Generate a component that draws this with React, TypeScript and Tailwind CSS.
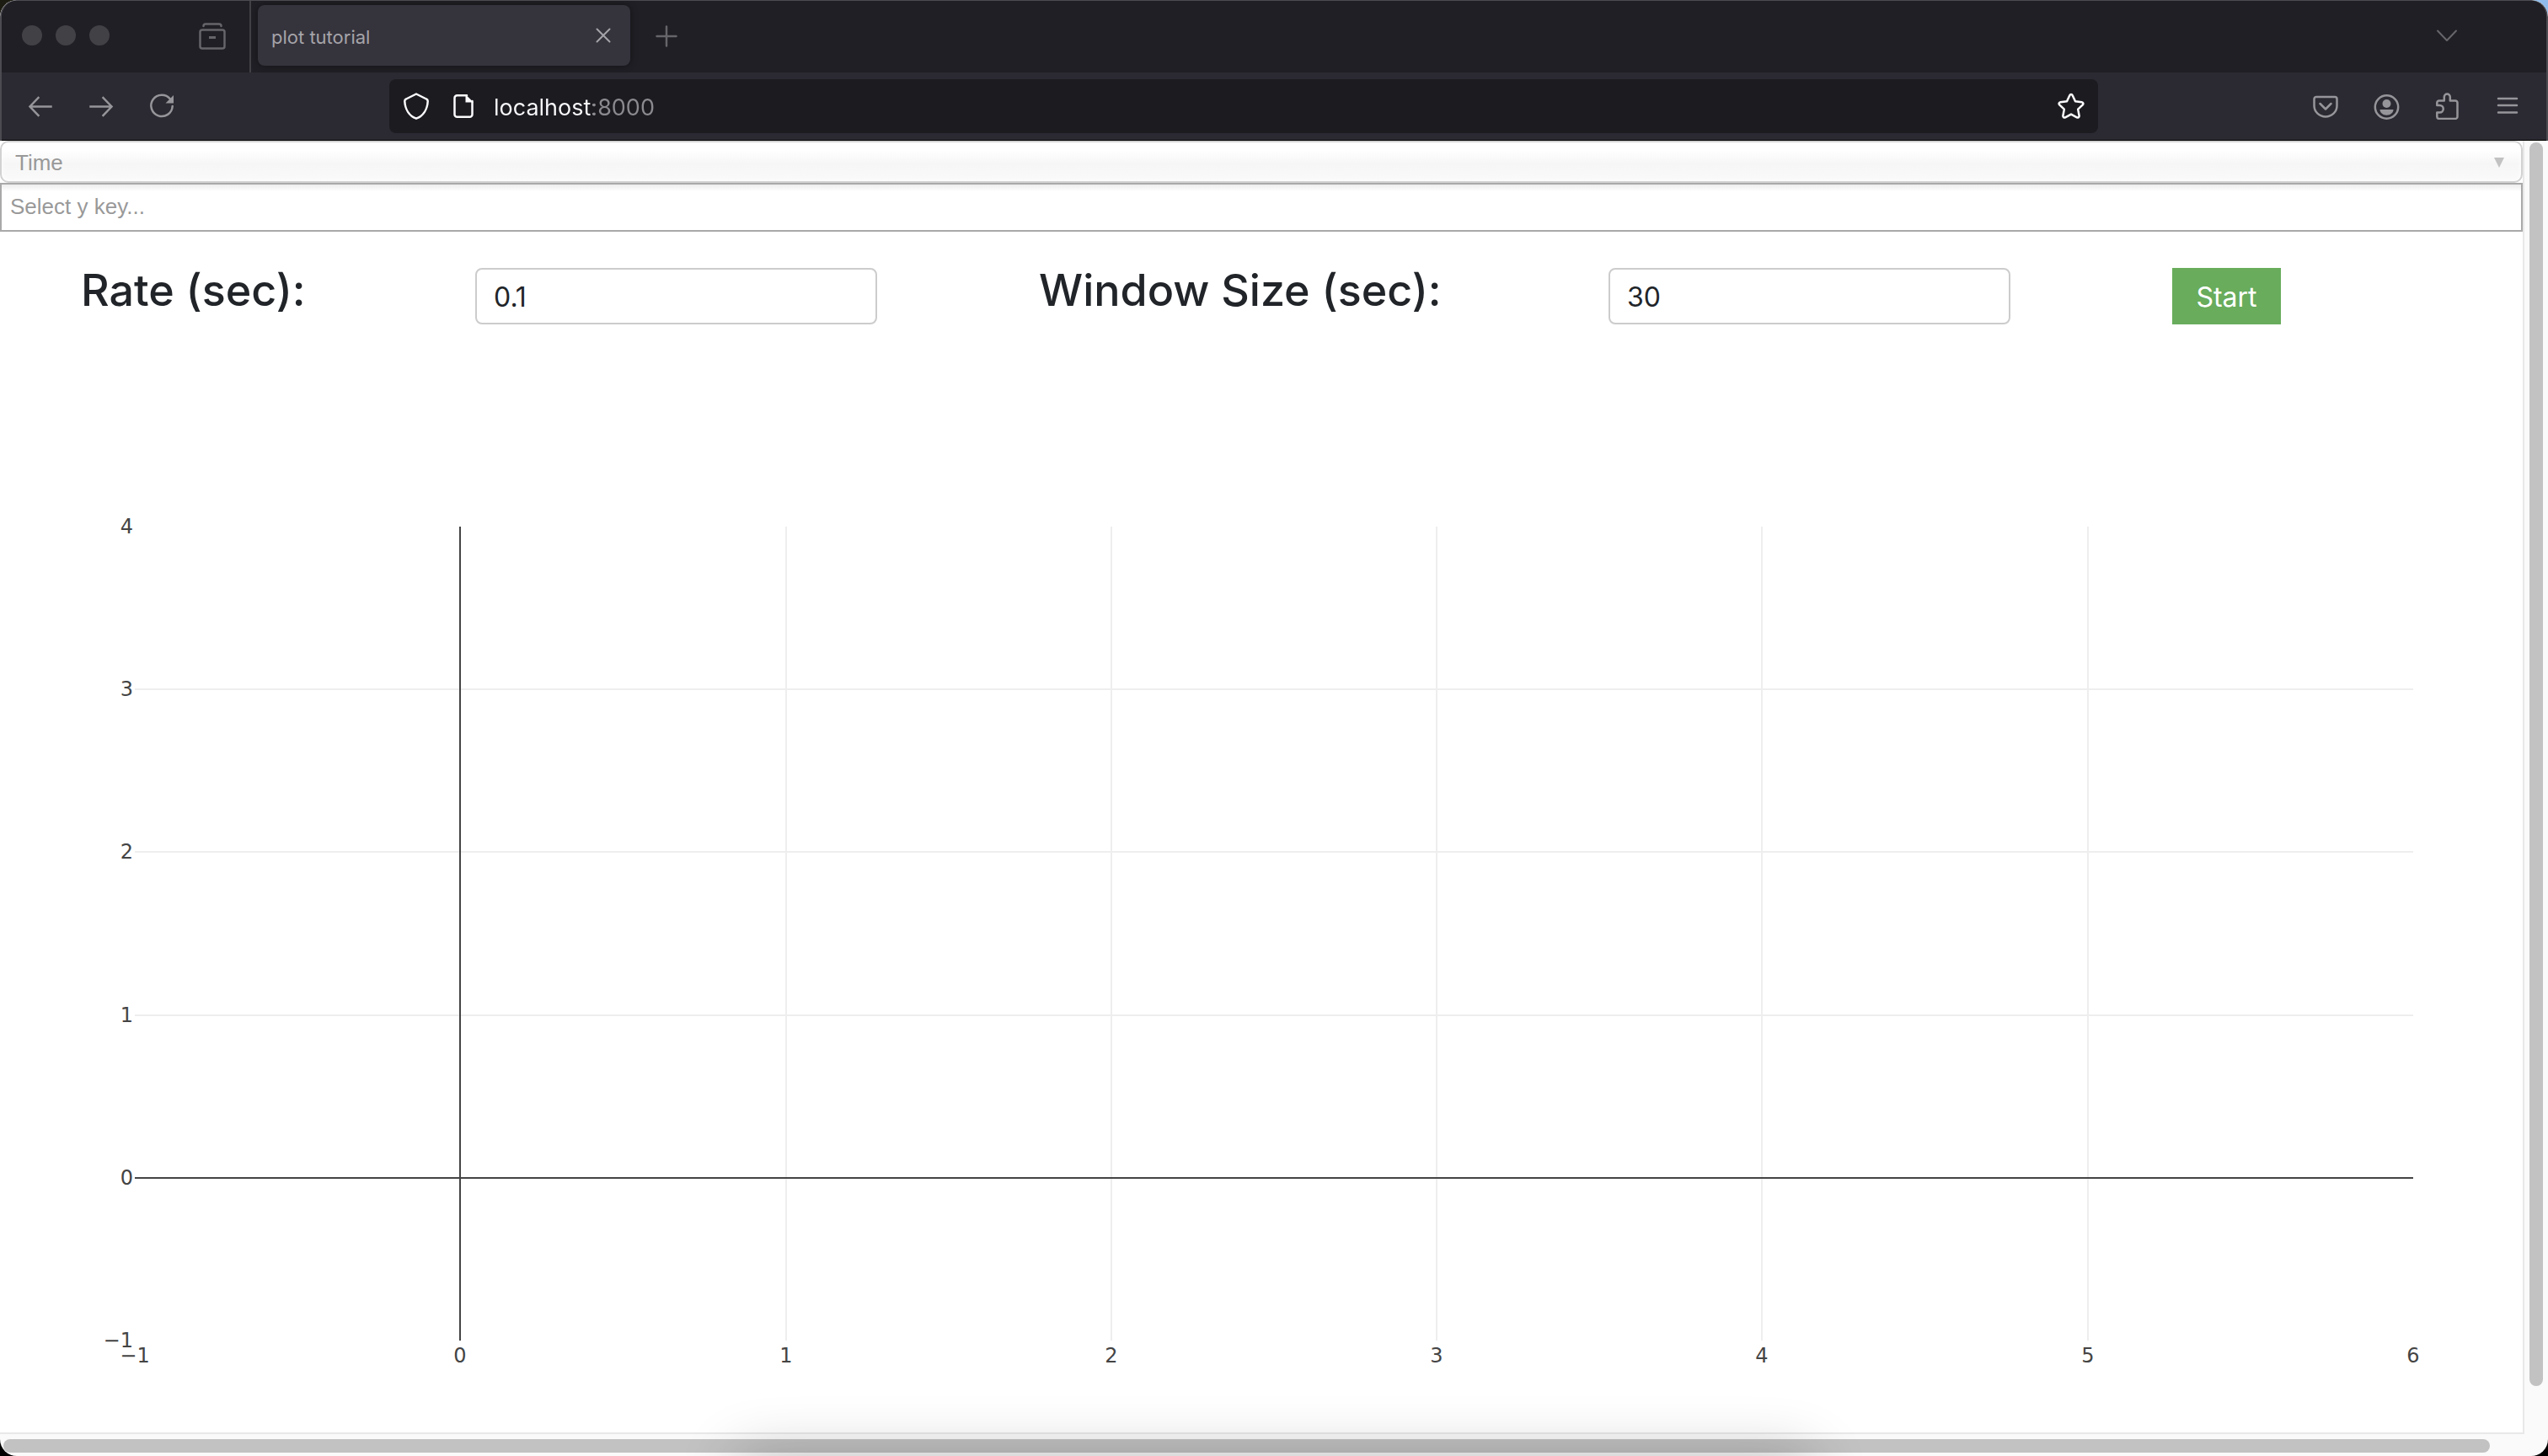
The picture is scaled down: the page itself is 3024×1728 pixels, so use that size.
import type { ReactNode } from "react";

const X_TICKS = [-1, 0, 1, 2, 3, 4, 5, 6];
const Y_TICKS = [-1, 0, 1, 2, 3, 4];

const PLOT = { left: 160, right: 2864, top: 200, bottom: 1166 };

const xPos = (v: number) =>
  Math.round(PLOT.left + ((v + 1) * (PLOT.right - PLOT.left)) / 7);
const yPos = (v: number) =>
  Math.round(PLOT.bottom - ((v + 1) * (PLOT.bottom - PLOT.top)) / 5);
const tickLabel = (v: number) => (v < 0 ? `\u2212${Math.abs(v)}` : `${v}`);

function Icon({ children }: { children: ReactNode }) {
  return (
    <svg
      viewBox="0 0 32 32"
      className="block size-8 shrink-0"
      fill="none"
      stroke="currentColor"
      strokeWidth="2.5"
      strokeLinecap="round"
      strokeLinejoin="round"
      aria-hidden="true"
    >
      {children}
    </svg>
  );
}

function TabBar() {
  return (
    <header className="flex h-[86px] items-center bg-[#201f25] text-[#65656a]">
      <div className="flex w-[296px] shrink-0 items-center pr-7 pl-[26px]">
        <div className="flex gap-4 pb-0.5">
          <span className="size-6 rounded-full bg-[#424146]" />
          <span className="size-6 rounded-full bg-[#424146]" />
          <span className="size-6 rounded-full bg-[#424146]" />
        </div>
        <button type="button" aria-label="Recent browsing" className="ml-auto">
          <Icon>
            <path d="M5.5 4C5.5 2.5 6.5 1.5 8 1.5h16c1.500 0 2.500 1 2.500 2.500" />
            <rect x="1.500" y="8.500" width="29" height="22" rx="2.500" />
            <path d="M12 17.500h8" strokeWidth="3" strokeLinecap="butt" />
          </Icon>
        </button>
      </div>
      <div className="h-full w-0.5 shrink-0 bg-[#424146]" />
      <div className="-mt-0.5 ml-2 flex h-[72px] w-[442px] shrink-0 items-center justify-between rounded-lg bg-[#35333c] px-4 text-[#a5a4a9] shadow-[0_0_8px_rgba(0,0,0,0.4)]">
        <span className="pt-1 text-[22px] leading-8">plot tutorial</span>
        <button type="button" aria-label="Close tab">
          <Icon>
            <path d="M8.500 8.500l15 15M23.500 8.500l-15 15" strokeWidth="2" />
          </Icon>
        </button>
      </div>
      <button type="button" aria-label="New tab" className="ml-[27px]">
        <Icon>
          <path d="M16 4.500v23M4.500 16h23" />
        </Icon>
      </button>
      <button type="button" aria-label="List all tabs" className="mr-[104px] ml-auto">
        <Icon>
          <path d="M5 9.500l11 11.500 11-11.500" strokeWidth="2" />
        </Icon>
      </button>
    </header>
  );
}

function NavBar() {
  return (
    <nav className="flex h-[81px] items-center border-b border-black bg-[#2b2a32] text-[#96959a]">
      <div className="flex w-[462px] shrink-0 gap-10 pl-8">
        <button type="button" aria-label="Back">
          <Icon>
            <path d="M28.500 16.500H4M13.500 6L3.500 16.500l10 10.500" strokeLinecap="square" strokeLinejoin="miter" />
          </Icon>
        </button>
        <button type="button" aria-label="Forward">
          <Icon>
            <path d="M3.500 16.500H28M18.500 6l10 10.500-10 10.500" strokeLinecap="square" strokeLinejoin="miter" />
          </Icon>
        </button>
        <button type="button" aria-label="Reload">
          <Icon>
            <path d="M26 7.500A12.700 12.700 0 1 0 28.700 16" />
            <path d="M30 3v9.500h-9.500z" fill="currentColor" stroke="none" />
          </Icon>
        </button>
      </div>
      <div className="flex h-16 grow items-center rounded-lg bg-[#1c1b20] px-4 text-[#fbfbfe]">
        <button type="button" aria-label="Tracking protection">
          <Icon>
            <path d="M16 1.500L28 7.500c1.500.7 1.800 1.500 1.700 2.800C29.200 19.500 24.500 27.500 16 30.700 7.500 27.500 2.800 19.500 2.300 10.300 2.200 9 2.500 8.200 4 7.500z" />
          </Icon>
        </button>
        <button type="button" aria-label="Site information" className="ml-6">
          <Icon>
            <path d="M20 3.300H8.500a3 3 0 0 0-3 3v19.400a3 3 0 0 0 3 3h15a3 3 0 0 0 3-3V10" />
            <path d="M18.500 2l9.500 9.500h-9.500z" fill="currentColor" stroke="none" />
          </Icon>
        </button>
        <input
          type="text"
          aria-label="Address"
          defaultValue="localhost:8000"
          className="ml-5 h-10 min-w-0 grow bg-[linear-gradient(to_right,#fbfbfe_118px,#8b8a8f_118px)] bg-clip-text pt-1 text-[27px] text-transparent caret-white outline-none"
        />
        <button type="button" aria-label="Bookmark this page">
          <Icon>
            <path d="M14.300 3.200c.7-1.500 2.700-1.500 3.400 0l3.300 7 7.700 1c1.600.2 2.200 2.100 1.100 3.200l-5.600 5.300 1.400 7.600c.3 1.600-1.300 2.800-2.700 2L16 25.600l-6.900 3.700c-1.400.8-3-.4-2.700-2l1.400-7.600-5.600-5.300c-1.100-1.100-.5-3 1.100-3.200l7.700-1z" />
          </Icon>
        </button>
      </div>
      <div className="flex shrink-0 gap-10 pr-8 pl-[254px]">
        <button type="button" aria-label="Save to Pocket">
          <Icon>
            <path d="M5 5h22a2.500 2.500 0 0 1 2.500 2.500v8a13.500 13 0 0 1-27 0v-8A2.500 2.500 0 0 1 5 5z" />
            <path d="M9.500 13l6.500 6.500 6.500-6.500" />
          </Icon>
        </button>
        <button type="button" aria-label="Account">
          <Icon>
            <circle cx="16.500" cy="17" r="13.700" />
            <circle cx="16.500" cy="13" r="5" fill="currentColor" stroke="none" />
            <path d="M8.500 20h16c0 4-4 6.700-8 6.700s-8-2.700-8-6.700z" fill="currentColor" stroke="none" />
          </Icon>
        </button>
        <button type="button" aria-label="Extensions">
          <Icon>
            <path d="M4.300 15V12a2.500 2.500 0 0 1 2.500-2.500H12.800V5a3.500 3.500 0 0 1 7 0V9.500H26a2.500 2.500 0 0 1 2.500 2.500v16.400a2.500 2.500 0 0 1-2.500 2.500H6.800a2.500 2.500 0 0 1-2.500-2.500V23.500h3.200a4.250 4.250 0 0 0 0-8.500z" />
          </Icon>
        </button>
        <button type="button" aria-label="Application menu">
          <Icon>
            <path d="M5 7h22M5 15h22M5 23.500h22" />
          </Icon>
        </button>
      </div>
    </nav>
  );
}

function KeySelectors() {
  return (
    <div className="font-['Liberation_Sans',Arial,sans-serif] text-[26px] leading-8">
      <div className="relative">
        <select
          disabled
          aria-label="X key"
          className="block h-[50px] w-full appearance-none rounded-[10px] border-2 border-[#d2d2d2] bg-[linear-gradient(#ffffff_20%,#f6f6f6_55%,#fafafa_100%)] px-4 pt-0.5 text-[#999999] opacity-100 shadow-[inset_0_0_6px_#ffffff]"
        >
          <option>Time</option>
        </select>
        <svg viewBox="0 0 12 12" className="pointer-events-none absolute top-5 right-[22px] size-3 fill-[#c2c2c2]" aria-hidden="true">
          <path d="M0 0h12L6 12z" />
        </svg>
      </div>
      <input
        type="text"
        aria-label="Y key"
        placeholder="Select y key..."
        className="block h-[58px] w-full border-2 border-[#a9a9a9] bg-[linear-gradient(#eeeeee_1%,#ffffff_15%)] px-2.5 pb-0.5 placeholder:text-[#999999]"
      />
    </div>
  );
}

function Controls() {
  return (
    <form className="mt-[43px] mb-10 flex gap-48 px-24 text-[#212529]" onSubmit={(e) => e.preventDefault()}>
      <label htmlFor="rate" className="w-[276px] shrink-0 text-[52px] leading-[54px] font-medium whitespace-nowrap">
        Rate (sec):
      </label>
      <input
        id="rate"
        type="text"
        defaultValue="0.1"
        className="h-[67px] w-[477px] rounded-lg border-2 border-[#cccccc] bg-white px-5 pt-0.5 text-[32px]"
      />
      <label htmlFor="window-size" className="w-[484px] shrink-0 text-[52px] leading-[54px] font-medium whitespace-nowrap">
        Window Size (sec):
      </label>
      <input
        id="window-size"
        type="text"
        defaultValue="30"
        className="h-[67px] w-[477px] rounded-lg border-2 border-[#cccccc] bg-white px-5 pt-0.5 text-[32px]"
      />
      <button type="submit" className="h-[67px] w-[129px] bg-[#68ac5c] pt-0.5 text-[32px] text-white">
        Start
      </button>
    </form>
  );
}

function Plot() {
  return (
    <svg viewBox="0 0 2994 1275" className="block h-auto w-full" role="img" aria-label="Empty plot">
      <g stroke="#eeeeee" strokeWidth="2">
        {X_TICKS.filter((v) => v > 0 && v < 6).map((v) => (
          <line key={v} x1={xPos(v)} x2={xPos(v)} y1={PLOT.top} y2={PLOT.bottom} />
        ))}
        {Y_TICKS.filter((v) => v > 0 && v < 4).map((v) => (
          <line key={v} x1={PLOT.left} x2={PLOT.right} y1={yPos(v)} y2={yPos(v)} />
        ))}
      </g>
      <g stroke="#444444" strokeWidth="2">
        <line x1={xPos(0)} x2={xPos(0)} y1={PLOT.top} y2={PLOT.bottom} />
        <line x1={PLOT.left} x2={PLOT.right} y1={yPos(0)} y2={yPos(0)} />
      </g>
      <g className="fill-[#444444] font-['DejaVu_Sans',Verdana,sans-serif] text-[24px]">
        {X_TICKS.map((v) => (
          <text key={v} x={xPos(v)} y={1192} textAnchor="middle">
            {tickLabel(v)}
          </text>
        ))}
        {Y_TICKS.map((v) => (
          <text key={v} x={158} y={yPos(v) + 8} textAnchor="end">
            {tickLabel(v)}
          </text>
        ))}
      </g>
    </svg>
  );
}

export default function App() {
  return (
    <div className="relative min-h-screen overflow-hidden bg-black bg-[linear-gradient(to_right,#1c1c12_50%,#8fbcec_50%)] bg-[length:100%_50%] bg-no-repeat font-['Inter','Liberation_Sans',sans-serif]">
      <div className="flex min-h-screen flex-col overflow-hidden rounded-[20px] bg-[#fafafa]">
        <div className="overflow-hidden rounded-t-[20px] border-x-2 border-t border-[#4c4b51] bg-[#201f25]">
          <div className="-mx-0.5 -mt-px">
            <TabBar />
            <NavBar />
          </div>
        </div>
        <div className="flex grow">
          <main className="min-w-0 grow border-r-2 border-b-2 border-[#e8e8e8] bg-white">
            <KeySelectors />
            <Controls />
            <Plot />
          </main>
          <div className="flex w-7 shrink-0 flex-col px-1.5 pt-0.5 pb-[57px]">
            <div className="grow rounded-full bg-[#c2c2c2]" />
          </div>
        </div>
        <div className="h-[26px] shrink-0 py-1.5 pr-[69px] pl-1">
          <div className="h-4 rounded-full bg-[#c2c2c2]" />
        </div>
      </div>
      <div className="pointer-events-none absolute inset-x-[876px] top-full h-40 shadow-[0_0_70px_rgba(0,0,0,0.24)]" />
    </div>
  );
}
